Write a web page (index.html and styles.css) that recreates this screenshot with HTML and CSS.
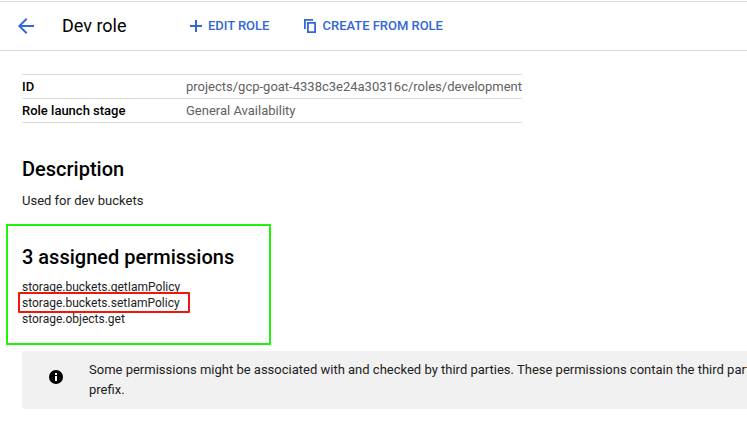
FILE: index.html
```html
<!DOCTYPE html>
<html lang="en">
<head>
<meta charset="utf-8">
<title>Dev role</title>
<link rel="stylesheet" href="styles.css">
</head>
<body>
<header class="toolbar">
  <svg class="back" width="16" height="16" viewBox="0 0 16 16"><path d="M16 7H3.8l5.6-5.6L8 0 0 8l8 8 1.4-1.4L3.8 9H16z"/></svg>
  <h1 class="title">Dev role</h1>
  <a class="action edit">
    <svg width="12" height="12" viewBox="0 0 12 12"><path d="M5 0h2v5h5v2H7v5H5V7H0V5h5z"/></svg>
    <span>EDIT ROLE</span>
  </a>
  <a class="action create">
    <svg width="12" height="14" viewBox="0 0 12 14"><path fill-rule="evenodd" d="M0 0h9v1.8H1.8V10H0zM3 3h9v11H3zM4.8 4.8v7.4h5.4V4.8z"/></svg>
    <span>CREATE FROM ROLE</span>
  </a>
</header>
<main class="content">
  <dl class="details">
    <div class="row"><dt>ID</dt><dd>projects/gcp-goat-4338c3e24a30316c/roles/development</dd></div>
    <div class="row"><dt>Role launch stage</dt><dd>General Availability</dd></div>
  </dl>
  <h2 class="heading">Description</h2>
  <p class="description">Used for dev buckets</p>
  <section class="permissions">
    <h2 class="heading">3 assigned permissions</h2>
    <ul class="list">
      <li>storage.buckets.getIamPolicy</li>
      <li class="marked">storage.buckets.setIamPolicy</li>
      <li>storage.objects.get</li>
    </ul>
  </section>
  <aside class="notice">
    <svg class="info" width="14" height="14" viewBox="0 0 14 14"><circle cx="7" cy="7" r="7"/><path fill="#fff" d="M6 3h2v2H6zM6 6h2v5H6z"/></svg>
    <p>Some permissions might be associated with and checked by third parties. These permissions contain the third part<br>prefix.</p>
  </aside>
</main>
</body>
</html>
```
FILE: styles.css
```css
*, *::after { box-sizing: border-box; }
body {
  margin: 0;
  height: 424px;
  overflow: hidden;
  background: #fff;
  color: #212121;
  font: 13px/20px Roboto, sans-serif;
}
h1, h2, p, dl, dd, ul { margin: 0; padding: 0; }
.toolbar {
  display: flex;
  align-items: center;
  height: 50px;
  margin-top: 1px;
  padding-left: 18px;
  border-top: 1px solid #dadada;
  border-bottom: 1px solid #dadada;
}
.back { fill: #3367d6; }
.title {
  width: 128px;
  margin-left: 28px;
  color: #000;
  font-size: 18px;
  font-weight: 400;
  line-height: 24px;
}
.action {
  display: flex;
  align-items: center;
  color: #3367d6;
  fill: #3367d6;
  font-weight: 500;
  white-space: nowrap;
}
.edit { width: 114px; gap: 6px; letter-spacing: -0.04px; }
.create { gap: 6.5px; letter-spacing: -0.02px; }
.content { padding: 23px 0 0 22px; }
.details {
  width: 500px;
  border-top: 1px solid #dadada;
}
.row {
  display: flex;
  height: 24px;
  border-bottom: 1px solid #dadada;
  line-height: 23px;
}
.row dt { width: 164px; color: #000; font-weight: 500; }
.row dd { color: #616161; white-space: nowrap; }
.heading {
  color: #000;
  font-size: 20px;
  font-weight: 500;
  line-height: 24px;
}
.details + .heading { margin-top: 34px; }
.description { margin-top: 10px; }
.permissions {
  width: 265px;
  height: 121px;
  margin: 13px 0 0 -16px;
  padding: 19px 14px 0;
  border: 2px solid #1ff30b;
}
.list {
  margin-top: 10px;
  list-style: none;
  font-size: 12px;
  line-height: 16px;
}
.marked { position: relative; }
.marked::after {
  content: "";
  position: absolute;
  top: -3px;
  left: -4px;
  width: 172px;
  height: 21px;
  border: 2px solid #f5140c;
  border-radius: 1px;
}
.notice {
  display: flex;
  align-items: center;
  height: 58px;
  margin-top: 6px;
  padding-left: 27px;
  border-radius: 4px 0 0 4px;
  background: #f1f1f1;
  white-space: nowrap;
  overflow: hidden;
}
.info { flex: none; margin-top: -6px; }
.notice p { margin-left: 26px; }
```
